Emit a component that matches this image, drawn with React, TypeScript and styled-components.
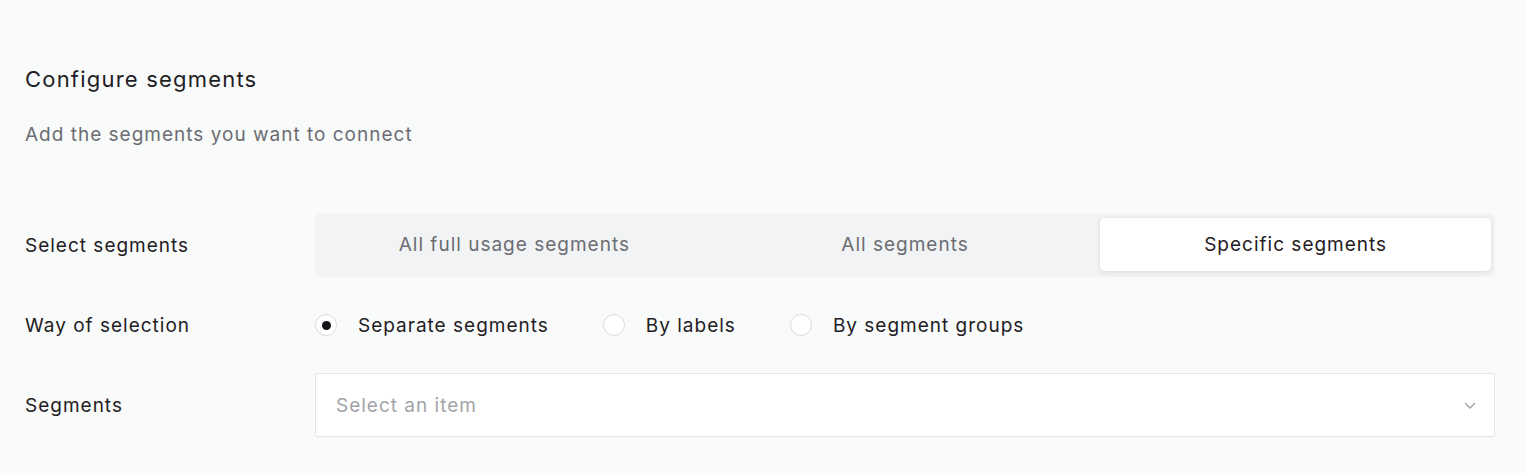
import React, { useState } from "react";
import styled, { createGlobalStyle } from "styled-components";

const Global = createGlobalStyle`
  html, body { margin: 0; padding: 0; background: #f9fafa; }
  body { font-family: Inter, "Noto Sans", sans-serif; color: #1f2024; }
  * { box-sizing: border-box; }
`;

const Page = styled.div`
  padding: 65px 31px 0 25px;
  display: flex;
  flex-direction: column;
`;

const Title = styled.h2`
  margin: 0;
  font-size: 22px;
  font-weight: 400;
  line-height: 28px;
  letter-spacing: 1.2px;
  color: #1f2024;
`;

const Subtitle = styled.p`
  margin: 29px 0 0;
  font-size: 19px;
  line-height: 26px;
  letter-spacing: 1px;
  color: #6b6d72;
`;

const Form = styled.div`
  margin-top: 65px;
  display: flex;
  flex-direction: column;
`;

const Row = styled.div<{ $h: number; $mt?: number }>`
  display: grid;
  grid-template-columns: 290px 1fr;
  align-items: center;
  min-height: ${(p) => p.$h}px;
  margin-top: ${(p) => p.$mt ?? 0}px;
`;

const Label = styled.div`
  font-size: 19px;
  letter-spacing: 1px;
  color: #1f2024;
`;

const Segmented = styled.div`
  display: grid;
  grid-template-columns: repeat(3, 1fr);
  padding: 5px 4px 6px;
  height: 64px;
  background: #f2f3f5;
  border-radius: 6px;
`;

const Tab = styled.button<{ $active?: boolean }>`
  border: none;
  font: inherit;
  font-size: 19px;
  letter-spacing: 1px;
  cursor: pointer;
  border-radius: 5px;
  background: ${(p) => (p.$active ? "#ffffff" : "transparent")};
  color: ${(p) => (p.$active ? "#1f2024" : "#6b6d72")};
  box-shadow: ${(p) => (p.$active ? "0 1px 4px rgba(20, 25, 40, 0.12)" : "none")};
`;

const Radios = styled.div`
  display: flex;
  align-items: center;
  gap: 54px;
`;

const RadioItem = styled.label`
  display: flex;
  align-items: center;
  gap: 21px;
  font-size: 19px;
  letter-spacing: 1px;
  color: #1f2024;
  cursor: pointer;
`;

const Circle = styled.span<{ $on?: boolean }>`
  width: 22px;
  height: 22px;
  border-radius: 50%;
  border: 1px solid #d9dbde;
  background: #fff;
  display: flex;
  align-items: center;
  justify-content: center;
  &::after {
    content: "";
    width: 9px;
    height: 9px;
    border-radius: 50%;
    background: #111216;
    display: ${(p) => (p.$on ? "block" : "none")};
  }
`;

const SelectBox = styled.div`
  height: 64px;
  background: #fff;
  border: 1px solid #e3e5e7;
  border-radius: 2px;
  display: flex;
  align-items: center;
  justify-content: space-between;
  padding: 0 18px 0 20px;
  font-size: 19px;
  letter-spacing: 1px;
  color: #a2a4a8;
`;

const Chevron = () => (
  <svg width="12" height="7" viewBox="0 0 12 7" fill="none">
    <path d="M1 1l5 5 5-5" stroke="#a0a2a6" strokeWidth="1.4" />
  </svg>
);

export default function App() {
  const [mode, setMode] = useState(2);
  const [way, setWay] = useState(0);
  const tabs = ["All full usage segments", "All segments", "Specific segments"];
  const ways = ["Separate segments", "By labels", "By segment groups"];
  return (
    <>
      <Global />
      <Page>
        <Title>Configure segments</Title>
        <Subtitle>Add the segments you want to connect</Subtitle>
        <Form>
          <Row $h={64}>
            <Label>Select segments</Label>
            <Segmented>
              {tabs.map((t, i) => (
                <Tab key={t} $active={mode === i} onClick={() => setMode(i)}>
                  {t}
                </Tab>
              ))}
            </Segmented>
          </Row>
          <Row $h={34} $mt={31}>
            <Label>Way of selection</Label>
            <Radios>
              {ways.map((w, i) => (
                <RadioItem key={w} onClick={() => setWay(i)}>
                  <Circle $on={way === i} />
                  {w}
                </RadioItem>
              ))}
            </Radios>
          </Row>
          <Row $h={64} $mt={31}>
            <Label>Segments</Label>
            <SelectBox>
              Select an item
              <Chevron />
            </SelectBox>
          </Row>
        </Form>
      </Page>
    </>
  );
}
